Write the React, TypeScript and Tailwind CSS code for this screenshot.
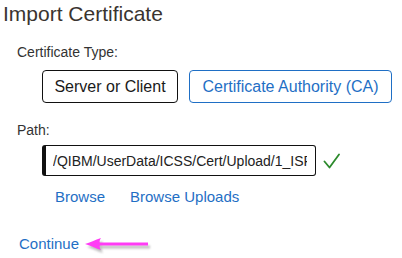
import { useState } from 'react';

const PATH_VALUE = '/QIBM/UserData/ICSS/Cert/Upload/1_ISRG_Root.cer';

export default function App() {
  const [certType, setCertType] = useState<'server' | 'ca'>('server');
  const [path, setPath] = useState(PATH_VALUE);

  const typeButton = (selected: boolean) =>
    selected
      ? 'border-[#111] text-[#1a1a1a]'
      : 'border-[#1f6fc5] text-[#1f6fc5]';

  return (
    <div className="relative w-[402px] h-[258px] bg-white font-['Liberation_Sans',Arial,sans-serif] overflow-hidden">
      <h1 className="pl-[3px] pt-[2px] text-[21px] leading-[24px] text-[#3a3430]">
        Import Certificate
      </h1>

      <div className="mt-[18px] pl-[17px] text-[14px] leading-[17px] text-[#333]">
        Certificate Type:
      </div>

      <div className="mt-[9px] ml-[42px] flex gap-[11px]">
        <button
          onClick={() => setCertType('server')}
          className={`w-[136px] h-[33px] rounded-[4px] border text-[16px] leading-[20px] bg-white ${typeButton(certType === 'server')}`}
        >
          Server or Client
        </button>
        <button
          onClick={() => setCertType('ca')}
          className={`w-[203px] h-[33px] rounded-[4px] border text-[16px] leading-[20px] bg-white ${typeButton(certType === 'ca')}`}
        >
          Certificate Authority (CA)
        </button>
      </div>

      <div className="mt-[19px] pl-[17px] text-[14px] leading-[17px] text-[#333]">
        Path:
      </div>

      <div className="mt-[6px] ml-[42px] flex items-center gap-[7px]">
        <input
          value={path}
          onChange={(e) => setPath(e.target.value)}
          className="w-[274px] h-[31px] rounded-[3px] border border-[#111] border-l-[4px] pl-[7px] pr-[8px] text-[14px] text-[#222] outline-none"
        />
        <svg width="17" height="16" viewBox="0 0 17 16" className="mt-[1px]">
          <path d="M1.5 8.5 L6.5 14.5 L16 1.5" fill="none" stroke="#2c8a2c" strokeWidth="1.8" strokeLinecap="round" strokeLinejoin="round" />
        </svg>
      </div>

      <div className="mt-[12px] ml-[55px] flex gap-[25px] text-[15px] leading-[18px] text-[#1f6fc5]">
        <a href="#" className="hover:underline">Browse</a>
        <a href="#" className="hover:underline">Browse Uploads</a>
      </div>

      <div className="mt-[29px] pl-[19px] text-[15px] leading-[18px]">
        <a href="#" className="text-[#1f6fc5] hover:underline">Continue</a>
      </div>

      {/* annotation arrow */}
      <svg width="72" height="20" viewBox="0 0 72 20" className="absolute left-[84px] top-[236px] pointer-events-none">
        <defs>
          <filter id="arrowShadow" x="-10%" y="-40%" width="130%" height="200%">
            <feGaussianBlur stdDeviation="1.2" />
          </filter>
        </defs>
        <g transform="translate(2 3)" fill="#8a8a8a" opacity="0.55" filter="url(#arrowShadow)">
          <path d="M1 8 C6 6.5 11 4 17 2 C15.5 4.5 15.5 5.5 15.8 6.5 L64 6.5 L64 9.5 L15.8 9.5 C15.5 10.5 15.5 11.5 17 14 C11 12 6 9.5 1 8 Z" />
        </g>
        <path
          d="M1 8 C6 6.5 11 4 17 2 C15.5 4.5 15.5 5.5 15.8 6.5 L64 6.5 L64 9.5 L15.8 9.5 C15.5 10.5 15.5 11.5 17 14 C11 12 6 9.5 1 8 Z"
          fill="#ff3cf5"
        />
      </svg>
    </div>
  );
}
